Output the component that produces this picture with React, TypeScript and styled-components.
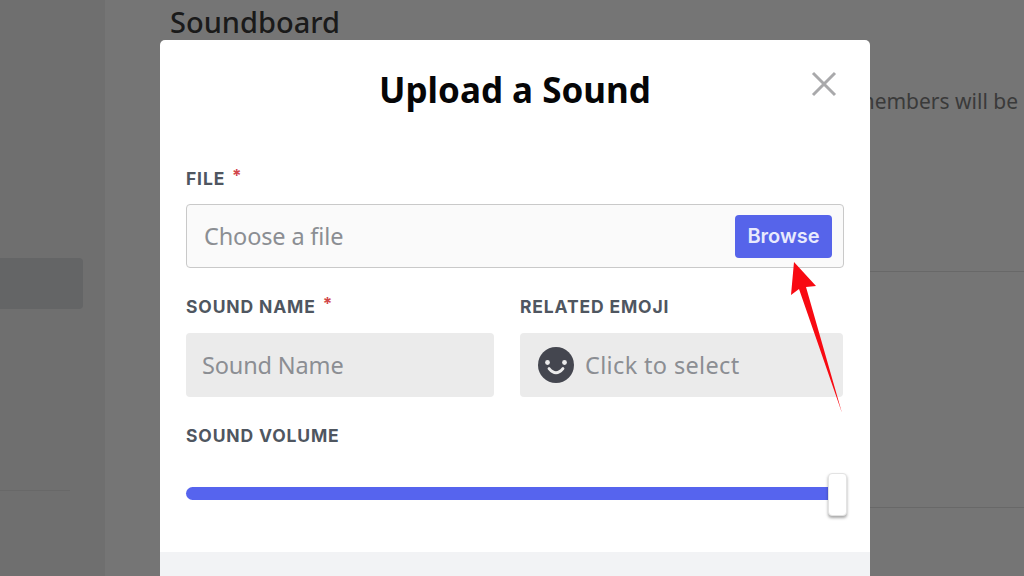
import React from "react";
import styled, { createGlobalStyle } from "styled-components";

const Global = createGlobalStyle`
  html, body { margin: 0; padding: 0; background: #757575; }
  * { box-sizing: border-box; }
`;
const FONT = `"Noto Sans", "Open Sans", sans-serif`;
const LABEL_FONT = `Inter, "Noto Sans", sans-serif`;

const Page = styled.div`
  position: relative; width: 1024px; height: 576px; overflow: hidden;
  display: flex; background: #757575; font-family: ${FONT};
`;
const Sidebar = styled.aside`
  width: 105px; flex: none; background: #6f6f6f;
  padding-top: 258px; display: flex; flex-direction: column;
`;
const SelectedItem = styled.div`
  width: 83px; height: 51px; background: #646566; border-radius: 0 4px 4px 0;
`;
const SideRule = styled.div`
  width: 70px; height: 1px; background: #686868; margin-top: 181px;
`;
const Main = styled.main`
  flex: 1; min-width: 0; padding: 3px 0 0 65px; display: flex; flex-direction: column;
`;
const Heading = styled.h1`
  margin: 0; font-size: 29px; line-height: 38px; font-weight: 500; color: #1a1a1a; white-space: nowrap;
`;
const Desc = styled.p`
  margin: 42px 0 0; font-size: 21px; line-height: 36px; color: #3a3a3a; white-space: nowrap;
  padding-left: 685px;
`;
const Rule = styled.div<{ $gap: number }>`
  height: 1px; background: #686868; margin-top: ${p => p.$gap}px;
`;
const Modal = styled.section`
  position: absolute; left: 160px; top: 40px; width: 710px; height: 536px;
  background: #fff; border-radius: 5px 5px 0 0; display: flex; flex-direction: column;
`;
const Header = styled.header`
  position: relative; height: 100px; display: flex; align-items: center; justify-content: center;
`;
const Title = styled.h2`
  margin: 0; font-size: 35px; line-height: 44px; font-weight: 700; color: #060607;
`;
const Close = styled.button`
  position: absolute; left: 650px; top: 30px; width: 28px; height: 28px; padding: 0;
  border: 0; background: none; color: #a9a9ab; display: flex;
`;
const Form = styled.div`
  flex: 1; padding: 27px 26px 0; display: flex; flex-direction: column;
`;
const Label = styled.label`
  display: flex; gap: 7px; height: 22px; padding-top: 1px; align-items: center;
  font: 700 17.5px ${LABEL_FONT}; letter-spacing: .85px; color: #4f5660; text-transform: uppercase; white-space: nowrap;
`;
const Star = styled.span`
  color: #d2474b; font-size: 17px; margin-top: -5px;
`;
const FileBox = styled.div`
  margin-top: 15px; height: 64px; background: #fafafa; border: 1px solid #c9c9c9; border-radius: 4px;
  display: flex; align-items: center; justify-content: space-between; padding: 0 11px 0 17px;
`;
const Hint = styled.span<{ $wide?: boolean }>`
  font-size: 23.5px; color: #8b8e93; white-space: nowrap; letter-spacing: ${p => (p.$wide ? ".35px" : "-.15px")};
`;
const Browse = styled.button`
  width: 97px; height: 43px; border: 0; border-radius: 4px; background: #5664ea; padding: 0;
  color: #e8eafd; font: 600 20px ${LABEL_FONT};
`;
const Row = styled.div`
  margin-top: 27px; display: grid; grid-template-columns: 308px 323px; column-gap: 26px;
`;
const Field = styled.div`
  display: flex; flex-direction: column;
`;
const Input = styled.div`
  margin-top: 16px; height: 64px; background: #ebebeb; border-radius: 4px;
  display: flex; align-items: center; gap: 11px; padding-left: 16px;
`;
const Face = styled.svg`
  width: 36px; height: 36px; flex: none; margin-left: 2px;
`;
const VolumeLabel = styled(Label)`
  margin-top: 27px;
`;
const SliderWrap = styled.div`
  position: relative; margin-top: 41px; height: 13px; width: 644px;
`;
const Track = styled.div`
  height: 13px; background: #5664ee; border-radius: 7px 0 0 7px;
`;
const Thumb = styled.div`
  position: absolute; left: 642px; top: -14px; width: 19px; height: 43px;
  background: #fff; border: 1px solid #e3e3e3; border-radius: 4px; box-shadow: 0 2px 3px rgba(0,0,0,.35);
`;
const Footer = styled.footer`
  height: 24px; flex: none; background: #f2f3f5;
`;
const Arrow = styled.svg`
  position: absolute; left: 780px; top: 255px; width: 70px; height: 165px;
`;

export default function App() {
  return (
    <Page>
      <Global />
      <Sidebar>
        <SelectedItem />
        <SideRule />
      </Sidebar>
      <Main>
        <Heading>Soundboard</Heading>
        <Desc>members will be</Desc>
        <Rule $gap={152} />
        <Rule $gap={235} />
      </Main>
      <Modal>
        <Header>
          <Title>Upload a Sound</Title>
          <Close aria-label="Close">
            <svg width="28" height="28" viewBox="0 0 28 28">
              <path d="M3 3 L25 25 M25 3 L3 25" stroke="currentColor" strokeWidth="3" fill="none" />
            </svg>
          </Close>
        </Header>
        <Form>
          <Label>File <Star>*</Star></Label>
          <FileBox>
            <Hint>Choose a file</Hint>
            <Browse>Browse</Browse>
          </FileBox>
          <Row>
            <Field>
              <Label>Sound Name <Star>*</Star></Label>
              <Input><Hint>Sound Name</Hint></Input>
            </Field>
            <Field>
              <Label>Related Emoji</Label>
              <Input>
                <Face viewBox="0 0 36 36">
                  <circle cx="18" cy="18" r="18" fill="#44464f" />
                  <circle cx="9.5" cy="15.5" r="2.4" fill="#ebebeb" />
                  <circle cx="26.5" cy="15.5" r="2.4" fill="#ebebeb" />
                  <path d="M11 21.5 Q18 30 25 21.5" stroke="#ebebeb" strokeWidth="2.8" fill="none" strokeLinecap="round" />
                </Face>
                <Hint $wide>Click to select</Hint>
              </Input>
            </Field>
          </Row>
          <VolumeLabel>Sound Volume</VolumeLabel>
          <SliderWrap>
            <Track />
            <Thumb />
          </SliderWrap>
        </Form>
        <Footer />
      </Modal>
      <Arrow viewBox="780 255 70 165">
        <path d="M794 262 L816 286 L806 287 L842 413 L799 289 L791 295 Z" fill="#f80a12" />
      </Arrow>
    </Page>
  );
}
